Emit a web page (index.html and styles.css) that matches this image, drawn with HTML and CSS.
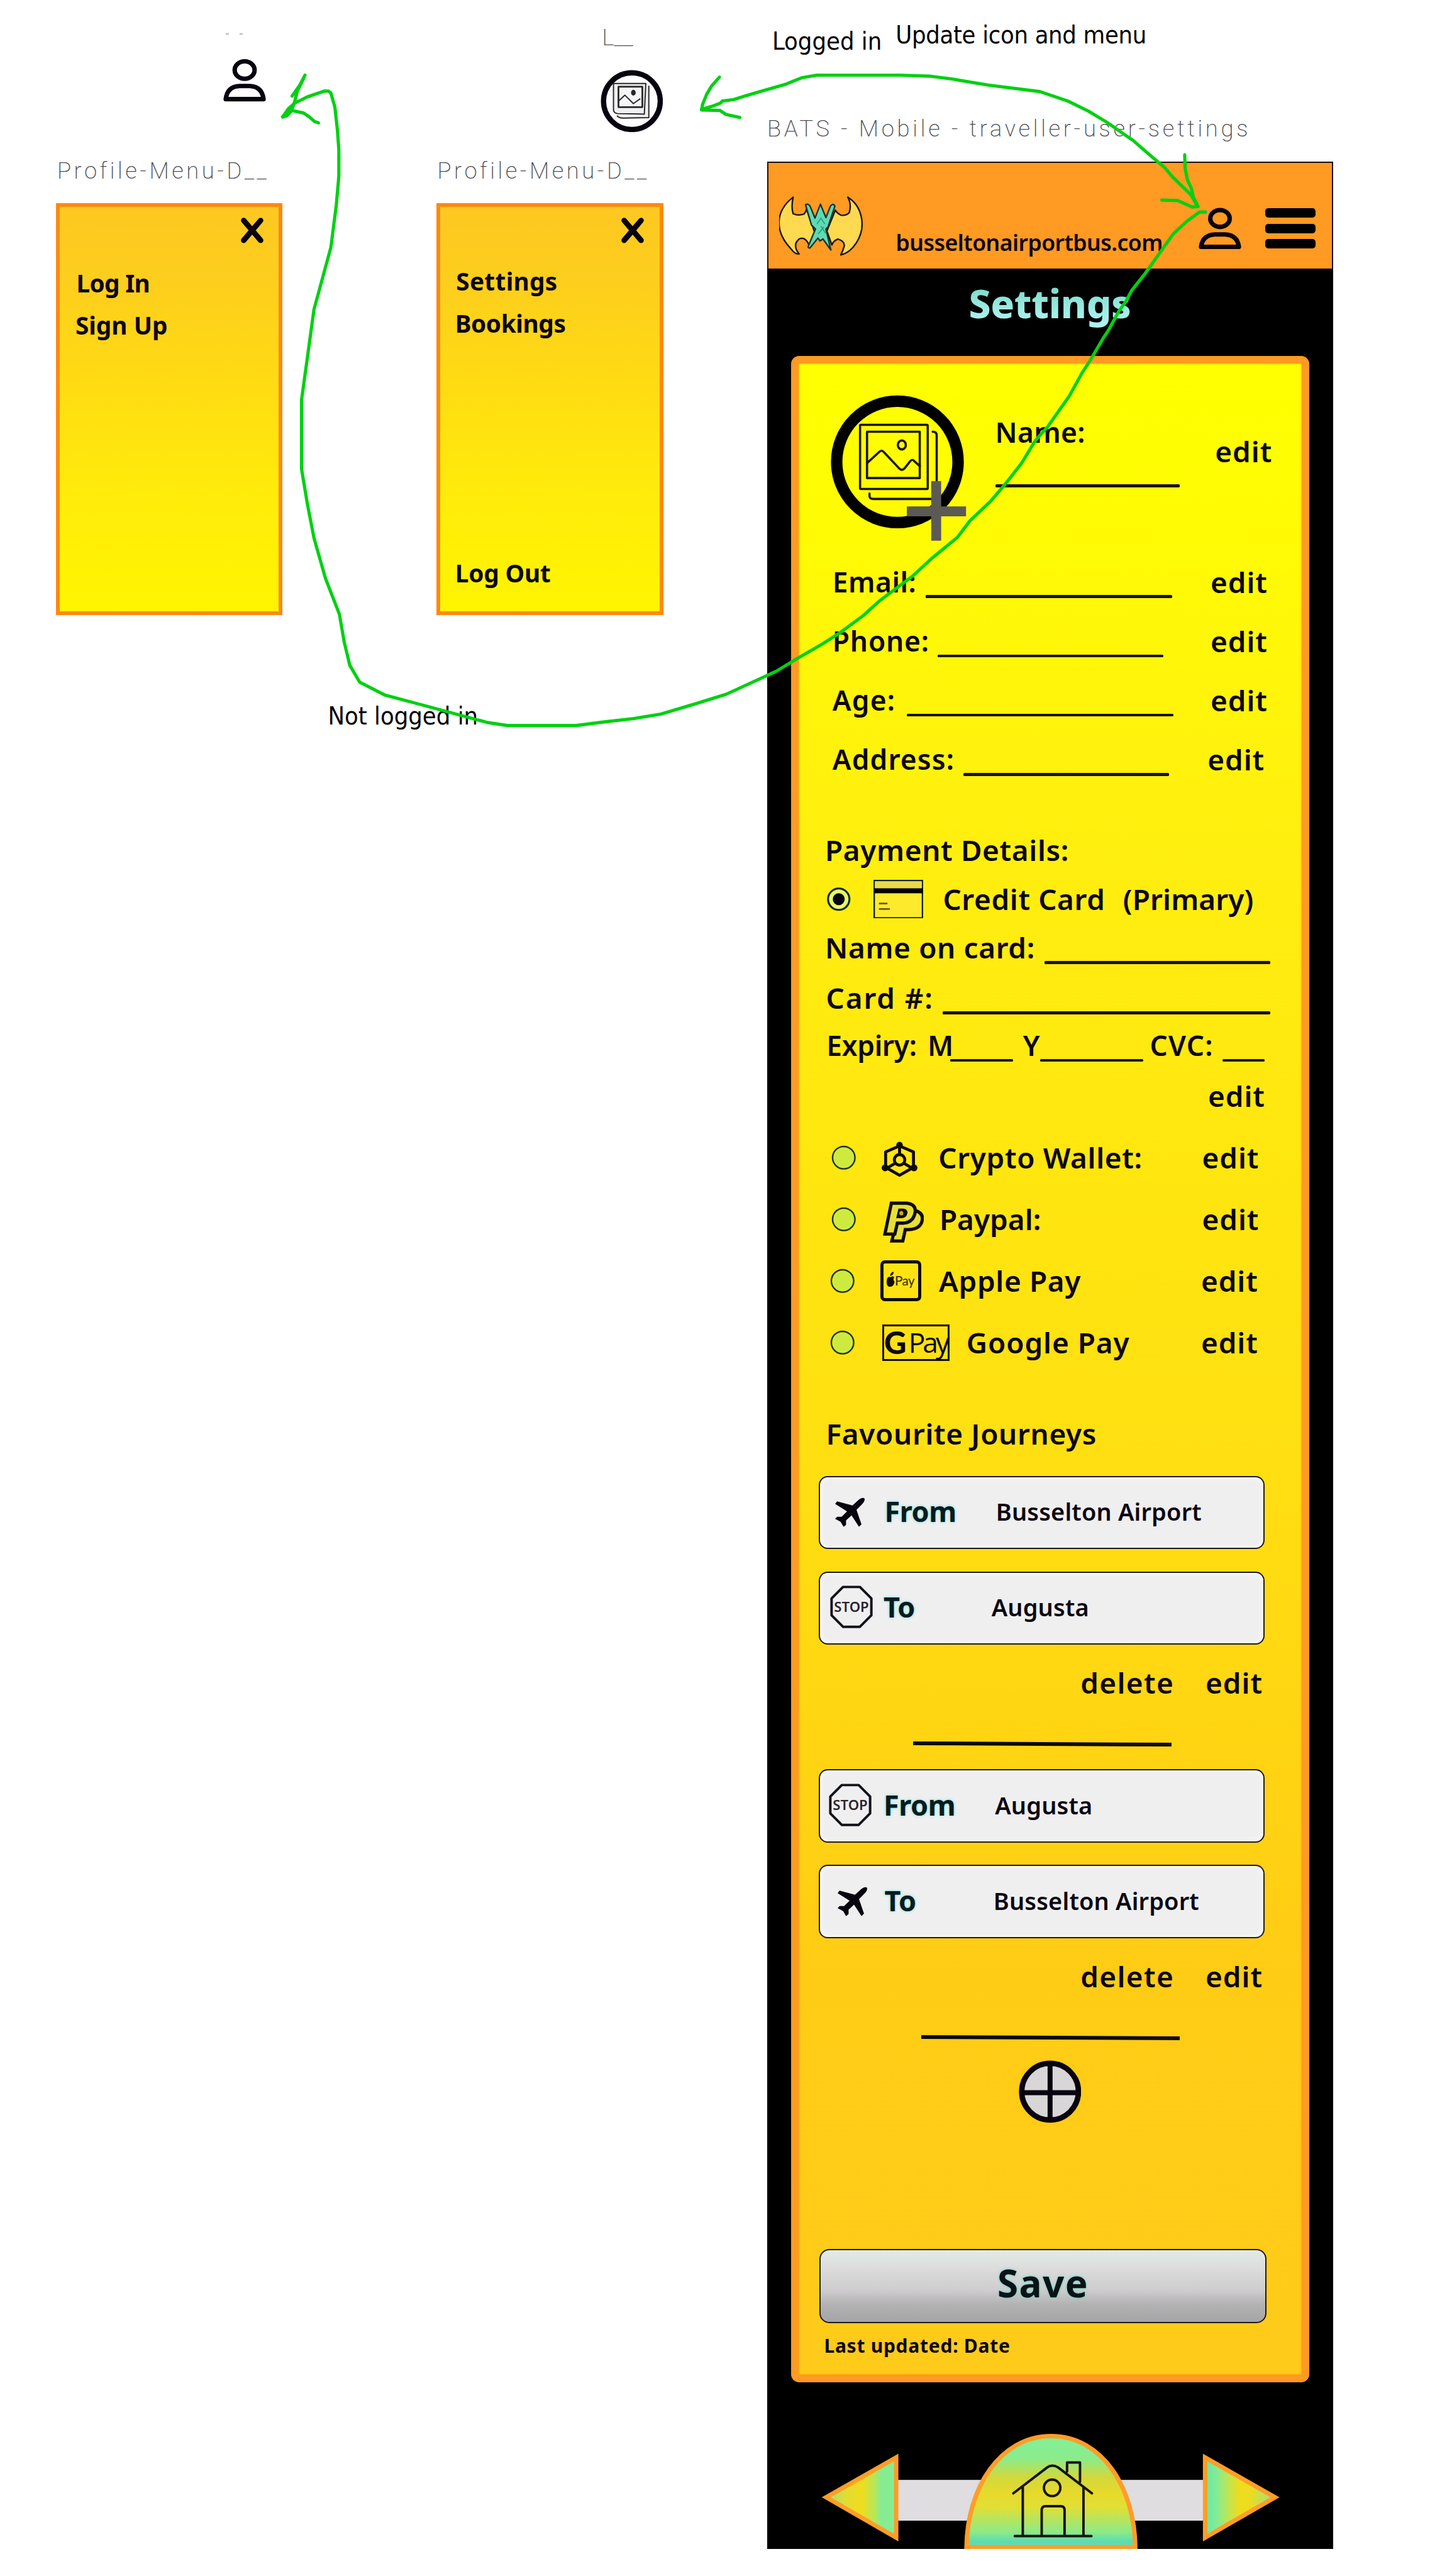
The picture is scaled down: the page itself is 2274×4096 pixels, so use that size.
FILE: index.html
```html
<!DOCTYPE html>
<html lang="en">
<head>
<meta charset="utf-8">
<title>BATS - Mobile - traveller-user-settings</title>
<link rel="stylesheet" href="styles.css">
</head>
<body>
<main class="canvas">

  <p class="frame-label label-tick" aria-hidden="true"><i></i><i></i></p>
  <svg class="node icon-guest" viewBox="0 0 86 86"><g fill="none" stroke="#08040f" stroke-width="9" stroke-linejoin="round"><ellipse cx="43" cy="22" rx="20" ry="17.500"/><path d="M5 80.500Q8 55 33 54H53Q78 55 81 80.500Z"/></g></svg>

  <p class="frame-label label-l">L__</p>
  <svg class="node icon-member" viewBox="0 0 126 126">
    <circle cx="63" cy="63" r="57" fill="#fdfdfd" stroke="#08040f" stroke-width="10.500"/>
    <g fill="#efeff0" stroke="#2a282c" stroke-width="2.500" stroke-linejoin="round"><path d="M33 92Q36 97 45 97L97 96V32"/><path d="M26 27.500H91L88 89 34 88Q26 87 26 80Z"/><path d="M36 34H84V75H36Z" stroke-width="3.500" fill="#f5f5f5"/><path d="M36 63L49 51 66 68 80 58" fill="none"/><ellipse cx="66" cy="46" rx="3.500" ry="4.500" fill="#2a282c"/></g>
  </svg>

  <p class="frame-label label-menu-a">Profile-Menu-D__</p>
  <p class="frame-label label-menu-b">Profile-Menu-D__</p>

  <nav class="menu menu-guest">
    <svg class="close" viewBox="0 0 48 54"><path d="M7 7L41 47M41 7L7 47" stroke="#08040f" stroke-width="11" stroke-linecap="round"/></svg>
    <a class="item log-in">Log In</a>
    <a class="item sign-up">Sign Up</a>
  </nav>
  <nav class="menu menu-member">
    <svg class="close" viewBox="0 0 48 54"><path d="M7 7L41 47M41 7L7 47" stroke="#08040f" stroke-width="11" stroke-linecap="round"/></svg>
    <a class="item settings">Settings</a>
    <a class="item bookings">Bookings</a>
    <a class="item log-out">Log Out</a>
  </nav>

  <p class="frame-label label-phone">BATS - Mobile - traveller-user-settings</p>

  <section class="phone">
    <header class="topbar">
      <svg class="logo" viewBox="0 0 168 122">
        <path d="M28 2Q24 22 28 35Q38 40 50 36Q54 32 55 26L72 74L60 98Q52 80 40 86Q26 98 40 116Q32 117 24 106C-10 70 -8 30 28 2ZM138 2Q146 16 141 33Q134 40 124 38Q116 34 113 28L96 70L106 98Q108 90 118 86Q132 90 131 100Q128 110 124 118Q142 114 155 94C178 58 164 18 138 2Z" fill="#ffd94f" stroke="#15141f" stroke-width="3" stroke-linejoin="round"/>
        <path d="M53 17Q60 14 63 22L72 44 83 16 94 43 103 20Q109 13 112 20L98 62 94 66 104 108 88 86 82 90 78 84 62 104Q56 105 60 97L73 66 65 58Z" fill="#5edab4" stroke="#16352f" stroke-width="3" stroke-linejoin="round"/>
        <path d="M76 56L84 44 92 56M78 76L90 62M84 60L93 74" fill="none" stroke="#2d9a7c" stroke-width="2"/>
      </svg>
      <span class="domain">busseltonairportbus.com</span>
      <svg class="user" viewBox="0 0 86 86"><g fill="none" stroke="#08040f" stroke-width="9" stroke-linejoin="round"><ellipse cx="43" cy="22" rx="19.500" ry="17"/><path d="M5 79Q8 55 33 54H53Q78 55 81 79Z"/></g></svg>
      <span class="burger"><i></i><i></i><i></i></span>
    </header>
    <h1 class="title"><span>Settings</span></h1>

    <form class="panel">
      <div class="profile">
        <svg class="avatar" viewBox="1670 794 274 295">
          <circle cx="1804" cy="928.500" r="122" fill="none" stroke="#000" stroke-width="23"/>
          <g fill="none" stroke="#1c1608" stroke-width="4.500" stroke-linejoin="round" stroke-linecap="round"><rect x="1729" y="854" width="136" height="129" rx="2"/><rect x="1743" y="868" width="106" height="93"/><path d="M1743 931L1768 908Q1773 904 1777 909L1808 942Q1813 947 1818 942L1830 927Q1834 922 1838 927L1849 937M1875 868Q1883 868 1883 875V970M1748 992V997Q1748 1003 1755 1003H1872"/><ellipse cx="1813" cy="894.500" rx="8" ry="9"/></g>
          <path d="M1872 967H1892V1018H1942V1038H1892V1087H1872V1038H1823V1018H1872Z" fill="#5c5a55"/>
        </svg>
        <div class="name"><span class="field-text">Name:</span><i class="blank"></i></div>
        <a class="edit">edit</a>
      </div>

      <div class="row email"><span class="field-text">Email:</span><i class="blank"></i><a class="edit">edit</a></div>
      <div class="row phone-no"><span class="field-text">Phone:</span><i class="blank"></i><a class="edit">edit</a></div>
      <div class="row age"><span class="field-text">Age:</span><i class="blank"></i><a class="edit">edit</a></div>
      <div class="row address"><span class="field-text">Address:</span><i class="blank"></i><a class="edit">edit</a></div>

      <h2 class="row payment-title">Payment Details:</h2>
      <div class="row credit">
        <svg class="radio" viewBox="0 0 50 50"><circle cx="25" cy="25" r="21.500" fill="#e9f76a" stroke="#102a22" stroke-width="4"/><circle cx="25" cy="25" r="12" fill="#08040f"/></svg>
        <svg class="card-icon" viewBox="0 0 100 78"><rect x="1.500" y="1.500" width="97" height="75" fill="#fdea2c" stroke="#15211c" stroke-width="3"/><rect x="3" y="3" width="94" height="14" fill="#e9da4a"/><rect x="1" y="17" width="98" height="10"/><path d="M11 47.500H28M11 58.500H33" stroke="#6b5c10" stroke-width="3.500"/></svg>
        <span class="credit-name">Credit Card</span><span class="primary">(Primary)</span>
      </div>
      <div class="row card-name"><span class="field-text">Name on card:</span><i class="blank"></i></div>
      <div class="row card-no"><span class="field-text">Card #:</span><i class="blank"></i></div>
      <div class="row expiry"><span class="ex">Expiry:</span><span class="mm">M</span><i class="blank b1"></i><span class="yy">Y</span><i class="blank b2"></i><span class="cvc">CVC:</span><i class="blank b3"></i></div>
      <div class="row card-edit"><a class="edit">edit</a></div>

      <div class="row method crypto">
        <svg class="radio" viewBox="0 0 50 50"><circle cx="25" cy="25" r="22.500" fill="#cfea3f" stroke="#1c3320" stroke-width="3"/></svg>
        <svg class="m-icon" viewBox="0 0 72 72"><g fill="none" stroke="#110b08" stroke-width="6" stroke-linejoin="round"><path d="M36 9L64 21V52L36 68 8 52V21Z"/><path d="M36 10V28M27 44L10 54M45 44L62 54"/><circle cx="36" cy="37" r="10.500"/></g><g fill="#110b08"><circle cx="36" cy="7" r="6.500"/><circle cx="7" cy="53" r="7"/><circle cx="65" cy="53" r="7"/></g></svg>
        <span class="m-name">Crypto Wallet:</span><a class="edit">edit</a>
      </div>
      <div class="row method paypal">
        <svg class="radio" viewBox="0 0 50 50"><circle cx="25" cy="25" r="22.500" fill="#cfea3f" stroke="#1c3320" stroke-width="3"/></svg>
        <svg class="m-icon" viewBox="0 0 83 84"><g fill="#e6df35" stroke="#110b08" stroke-width="6.500" stroke-linejoin="miter"><path d="M34 18H64Q82 24 79 38Q76 56 52 57H45L40 80H18L30 30Z"/><path d="M17 4H48Q66 6 65 21Q62 42 42 44H29L24 66H4Z"/><path d="M32 16H41Q50 17 48 25Q46 33 37 33H28Z" fill="#110b08" stroke-width="2"/></g><ellipse cx="37" cy="24" rx="4" ry="4.500" fill="#c9ae10"/></svg>
        <span class="m-name">Paypal:</span><a class="edit">edit</a>
      </div>
      <div class="row method apple">
        <svg class="radio" viewBox="0 0 50 50"><circle cx="25" cy="25" r="22.500" fill="#cfea3f" stroke="#1c3320" stroke-width="3"/></svg>
        <span class="apple-badge"><svg viewBox="0 0 16 32"><path d="M8 11Q12 8 15 11Q12 16 16 21Q13 31 8 30Q0 32 0 21Q0 8 8 11ZM7 9Q7 2 14 0Q14 7 7 9Z" fill="#110b08"/></svg>Pay</span>
        <span class="m-name">Apple Pay</span><a class="edit">edit</a>
      </div>
      <div class="row method google">
        <svg class="radio" viewBox="0 0 50 50"><circle cx="25" cy="25" r="22.500" fill="#cfea3f" stroke="#1c3320" stroke-width="3"/></svg>
        <span class="gpay-badge"><b>G</b><span>Pay</span></span>
        <span class="m-name">Google Pay</span><a class="edit">edit</a>
      </div>

      <h2 class="row fav-title">Favourite Journeys</h2>
      <div class="stop f1"><svg class="plane" viewBox="0 0 60 60"><path d="M46 6Q54 -1 59 2Q61 7 53 15L43 25L53 54L48 59L33 36L22 46L22 55L17 59L11 49L0 43L4 39L13 39L24 28L0 13L4 8L35 16Z" fill="#08040f"/></svg><b>From</b><span class="place">Busselton Airport</span></div>
      <div class="stop f2"><svg class="sign" viewBox="0 0 86 86"><path d="M26 3H60L83 26V60L60 83H26L3 60V26Z" fill="none" stroke="#15121a" stroke-width="5" stroke-linejoin="round"/><text x="43" y="53" text-anchor="middle" textLength="70" lengthAdjust="spacingAndGlyphs">STOP</text></svg><b>To</b><span class="place">Augusta</span></div>
      <div class="actions a1"><a class="delete">delete</a><a class="edit">edit</a></div>
      <hr class="rule r1">
      <div class="stop f3"><svg class="sign" viewBox="0 0 86 86"><path d="M26 3H60L83 26V60L60 83H26L3 60V26Z" fill="none" stroke="#15121a" stroke-width="5" stroke-linejoin="round"/><text x="43" y="53" text-anchor="middle" textLength="70" lengthAdjust="spacingAndGlyphs">STOP</text></svg><b>From</b><span class="place">Augusta</span></div>
      <div class="stop f4"><svg class="plane" viewBox="0 0 60 60"><path d="M46 6Q54 -1 59 2Q61 7 53 15L43 25L53 54L48 59L33 36L22 46L22 55L17 59L11 49L0 43L4 39L13 39L24 28L0 13L4 8L35 16Z" fill="#08040f"/></svg><b>To</b><span class="place">Busselton Airport</span></div>
      <div class="actions a2"><a class="delete">delete</a><a class="edit">edit</a></div>
      <hr class="rule r2">
      <svg class="add" viewBox="0 0 126 126"><circle cx="63" cy="63" r="57" fill="#d8d6d6" stroke="#08040f" stroke-width="11"/><path d="M63 6V120M6 65H120" stroke="#08040f" stroke-width="10"/></svg>
      <button class="save" type="button">Save</button>
      <p class="updated">Last updated: Date</p>
    </form>

    <svg class="tabbar" viewBox="1651 4888 922 235">
      <defs>
        <linearGradient id="dome" x1="0" y1="0" x2="0" y2="1"><stop offset="0.080" stop-color="#86ee94"/><stop offset="0.200" stop-color="#8aec8c"/><stop offset="0.370" stop-color="#d2d83c"/><stop offset="0.520" stop-color="#e8da2a"/><stop offset="0.640" stop-color="#e0df35"/><stop offset="0.860" stop-color="#8eea86"/><stop offset="0.950" stop-color="#5cdbb2"/></linearGradient>
        <linearGradient id="left" x1="1" y1="0" x2="0" y2="0"><stop offset="0.100" stop-color="#86ec92"/><stop offset="0.220" stop-color="#86ec92"/><stop offset="0.300" stop-color="#b4e75c"/><stop offset="0.500" stop-color="#f0dc1c"/><stop offset="0.700" stop-color="#e4dc30"/><stop offset="0.900" stop-color="#b8e060"/></linearGradient>
        <linearGradient id="right" x1="0" y1="0" x2="1" y2="0"><stop offset="0.080" stop-color="#76e89e"/><stop offset="0.180" stop-color="#86ec92"/><stop offset="0.300" stop-color="#b4e75c"/><stop offset="0.500" stop-color="#f0dc1c"/><stop offset="0.650" stop-color="#ecdc20"/><stop offset="0.850" stop-color="#b8e060"/></linearGradient>
      </defs>
      <rect x="1800" y="4983" width="625" height="82" fill="#dfdddf"/>
      <g stroke="#ff9d28" stroke-width="9"><path d="M1661 5018L1801.500 4938V5099Z" fill="url(#left)"/><path d="M2422.500 4938V5099L2563 5018Z" fill="url(#right)"/>
      <path d="M1943 5118.500C1944 5000 2010 4895 2113 4895S2281 5000 2282 5118.500Z" fill="url(#dome)"/></g>
      <g fill="none" stroke="#17140f" stroke-width="5" stroke-linejoin="round" stroke-linecap="round"><path d="M2037 5010L2105 4958Q2115 4951 2127 4958L2195 5010M2056 4998V5095M2178 4998V5095M2040 5096H2194M2094 5095V5044Q2094 5036 2102 5036H2132Q2140 5036 2140 5044V5095M2145 4966V4948H2171V4987"/><circle cx="2115" cy="4999" r="16.500"/></g>
    </svg>
  </section>

  <p class="note note-out">Not logged in</p>
  <p class="note note-in">Logged in</p>
  <p class="note note-update">Update icon and menu</p>

  <svg class="arrows" viewBox="0 0 2874 5176"><g fill="none" stroke="#02d012" stroke-width="6.500" stroke-linecap="round" stroke-linejoin="round">
    <path d="M1410 220L1430 214 1448 207 1452 203 1475 200 1500 192 1528 184 1580 169 1612 156 1642 151H1807L1868 153 1915 159 1986 171 2090 184 2146 203 2187 223 2225 246 2277 282 2315 315 2341 337 2357 356 2394 392 2407 415"/>
    <path d="M1446 155L1430 173 1420 190 1412 210 1410 221 1447 222 1459 230 1487 236M2381 311L2382 340 2387 363 2394 377 2398 395 2408 415 2396 416 2367 403 2335 402"/>
    <path d="M2423 426H2411L2386 444 2359 469 2343 491 2319 525 2302 549 2275 583 2262 607 2249 625 2227 665 2217 680 2192 723 2176 747 2149 796 2106 857 2081 885 2053 931 2017 977 1991 1007 1949 1047 1924 1080 1874 1121 1835 1157 1767 1208 1735 1237 1689 1271 1653 1294 1603 1323 1560 1349 1460 1395 1399 1414 1328 1435 1274 1444 1212 1451 1158 1458H1020L980 1452 846 1416 774 1397 723 1371 703 1337 692 1291 682 1234 654 1162 631 1081 618 1014 606 942V804L618 717 631 622 665 497 676 411 681 354V300L678 260 673 215 665 187 660 183H652L617 195 593 207 580 218 568 235"/>
    <path d="M613 151L602 172 587 193M610 158L598 182 592 205 585 224 576 233 568 235M587 222L610 227 623 236 632 244 640 247"/>
    <path d="M579 220L584 222 573 233Z" fill="#02d012"/>
  </g></svg>
</main>
</body>
</html>
```
FILE: styles.css
```css
/* 1rem is ten design units of the 2874 x 5176 board */
html { font-size: 7.9123px; }
* { box-sizing: border-box; }
body { margin: 0; background: #fff; }
p, h1, h2 { margin: 0; font-weight: inherit; }
svg { display: block; flex: none; }
i { display: block; flex: none; }

.canvas {
  position: relative;
  width: 287.4rem;
  height: 517.6rem;
  overflow: hidden;
  font-family: "Noto Sans", "Open Sans", sans-serif;
  color: #0d0712;
  white-space: nowrap;
}

/* Frames and notes placed freely on the board */
.node, .frame-label, .note, .menu, .phone, .arrows { position: absolute; }
.arrows { left: 0; top: 0; width: 100%; height: 100%; }

.icon-guest { left: 44.9rem; top: 11.9rem; width: 8.6rem; height: 8.6rem; }
.icon-member { left: 120.7rem; top: 14rem; width: 12.6rem; height: 12.6rem; }

.frame-label { font: 200 4.6rem/6rem "Roboto", sans-serif; color: #4b4b4f; }
.label-tick { left: 45.4rem; top: 6.7rem; display: flex; gap: 2.2rem; }
.label-tick i { width: .6rem; height: .2rem; background: #b5b5b8; }
.label-l { left: 121rem; top: 4.5rem; }
.label-menu-a, .label-menu-b { top: 31.4rem; letter-spacing: .57rem; }
.label-menu-a { left: 11.5rem; }
.label-menu-b { left: 87.9rem; }
.label-phone { left: 154.2rem; top: 22.9rem; letter-spacing: .59rem; }

.note { font: 5rem/6rem "DejaVu Sans Condensed", "DejaVu Sans", sans-serif; color: #000; }
.note-out { left: 65.9rem; top: 140.9rem; }
.note-in { left: 155.2rem; top: 5.3rem; }
.note-update { left: 180rem; top: 4.1rem; letter-spacing: -.04rem; }

/* Drop-down menus */
.menu {
  top: 40.8rem;
  width: 45.6rem;
  height: 82.8rem;
  display: flex;
  flex-direction: column;
  border: .8rem solid #fb8a12;
  background: linear-gradient(#fdc822, #fdcf1c 20%, #ffdc12 45%, #ffec0a 72%, #fff500);
}
.menu-guest { left: 11.2rem; }
.menu-member { left: 87.7rem; }
.close { width: 4.8rem; height: 5.4rem; margin: 2.1rem 3rem 0 auto; }
.item { font-size: 4.9rem; line-height: 6rem; font-weight: 700; }
.log-in { margin: 4.9rem 0 0 3.4rem; letter-spacing: -.09rem; }
.sign-up { margin: 2.5rem 0 0 3.2rem; }
.settings { margin: 4.5rem 0 0 3.2rem; letter-spacing: .04rem; }
.bookings { margin: 2.5rem 0 0 3rem; letter-spacing: -.05rem; }
.log-out { margin: 44.2rem 0 0 3rem; letter-spacing: -.02rem; }

/* Phone frame */
.phone {
  left: 154.2rem;
  top: 32.5rem;
  width: 113.8rem;
  height: 479.8rem;
  display: flex;
  flex-direction: column;
  background: #000;
}
.topbar {
  height: 21.5rem;
  display: flex;
  border: .3rem solid #1a0d05;
  border-bottom: 0;
  background: #ff9a22;
  flex: none;
}
.logo { width: 16.8rem; height: 12.2rem; margin: 6.7rem 0 0 2.2rem; }
.domain { flex: none; width: 54rem; margin: 13.5rem 0 0 6.6rem; font-size: 4.5rem; line-height: 5rem; font-weight: 600; letter-spacing: -.07rem; }
.user { width: 8.6rem; height: 8.6rem; margin: 8.9rem 0 0 6.9rem; }
.burger { display: flex; flex-direction: column; gap: 1.2rem; margin: 9.1rem 0 0 4.8rem; }
.burger i { width: 10.1rem; height: 1.9rem; border-radius: .6rem; background: #000; }
.title { height: 17.5rem; padding: 1.4rem 0 0 40.5rem; font-size: 7.9rem; line-height: 11rem; font-weight: 800; flex: none; }
.title span { background: linear-gradient(#7fdcca 25%, #a3efea 70%, #b3f4f0); -webkit-background-clip: text; background-clip: text; color: transparent; letter-spacing: -.05rem; }

.panel {
  width: 104.2rem;
  height: 407.3rem;
  margin-left: 4.8rem;
  display: flex;
  flex-direction: column;
  flex: none;
  border: 1.6rem solid #ff9a22;
  border-radius: 1.6rem;
  background: linear-gradient(#ffff00, #fffb04 8%, #ffee10 25%, #ffe60f 40%, #ffdf12 55%, #ffd512 68%, #ffcc15 80%, #fecb1a) padding-box;
  box-shadow: inset 0 0 .4rem #e88a10;
  font-size: 5.8rem;
  font-weight: 600;
}
.blank { height: .6rem; background: #18120a; border-radius: .2rem; }
.edit { letter-spacing: .12rem; }

.profile { display: flex; height: 35.8rem; margin-top: 6.3rem; padding-left: 6.5rem; }
.avatar { width: 27.4rem; height: 29.5rem; }
.name { width: 37.1rem; margin: 4.4rem 0 0 5.6rem; display: flex; flex-direction: column; line-height: 6.5rem; letter-spacing: .04rem; }
.name .blank { margin-top: 7.1rem; width: 37.1rem; }
.profile .edit { margin: 8.1rem 0 0 7.1rem; line-height: 6.5rem; }

.row { display: flex; align-items: center; height: 6.5rem; line-height: 6.5rem; padding: 0 6.9rem 0 6.8rem; flex: none; letter-spacing: .08rem; font-size: 5.8rem; }
.row + .row { margin-top: 5.4rem; }
.row > span { flex: none; }
.row .blank { align-self: flex-end; }
.row .edit { margin-left: auto; }
.profile + .row { margin-top: -1.4rem; }
.profile .field-text, .email .field-text, .phone-no .field-text, .age .field-text, .address .field-text { font-size: 5.6rem; }
.email .field-text { width: 18.7rem; letter-spacing: .06rem; }
.email .blank { width: 49.6rem; }
.phone-no .field-text { width: 21.1rem; letter-spacing: .1rem; }
.phone-no .blank { width: 45.4rem; }
.age .field-text { width: 14.9rem; letter-spacing: .15rem; }
.age .blank { width: 53.6rem; }
.address { padding-right: 7.5rem; }
.address .field-text { width: 26.3rem; letter-spacing: .14rem; }
.address .blank { width: 41.4rem; }

.row.payment-title { margin-top: 11.7rem; padding-left: 5.3rem; }
.row.credit { margin-top: 3.3rem; padding-left: 5.6rem; }
.radio { width: 5rem; height: 5rem; }
.card-icon { width: 10rem; height: 7.8rem; margin-left: 4.4rem; }
.credit-name { width: 36.2rem; margin-left: 4rem; }
.primary { letter-spacing: .01rem; }
.row.card-name { margin-top: 3.3rem; padding-left: 5.3rem; }
.card-name .field-text { width: 44.1rem; }
.card-name .blank { width: 45.4rem; }
.row.card-no { margin-top: 3.6rem; padding-left: 5.5rem; }
.card-no .field-text { width: 23.4rem; letter-spacing: .24rem; }
.card-no .blank { width: 65.9rem; }
.row.expiry { margin-top: 3.1rem; padding-left: 5.6rem; letter-spacing: -.04rem; font-size: 5.6rem; }
.expiry .ex { width: 20.3rem; }
.expiry .mm { width: 4.6rem; }
.b1 { width: 12.6rem; }
.expiry .yy { width: 3.4rem; margin-left: 2rem; }
.b2 { width: 20.8rem; }
.expiry .cvc { width: 14.6rem; margin-left: 1.3rem; letter-spacing: .15rem; }
.b3 { width: 8.5rem; }
.row.card-edit { margin-top: 3.6rem; padding-right: 7.4rem; }

.row.method { margin-top: 5.9rem; padding: 0 8.6rem 0 6.6rem; }
.method .radio { margin-top: -.1rem; }
.crypto .m-icon { width: 7.2rem; height: 7.2rem; margin: .6rem 0 0 5.1rem; }
.crypto .m-name { margin-left: 4.2rem; }
.paypal .m-icon { width: 8.3rem; height: 8.4rem; margin: 1rem 0 0 5.3rem; }
.paypal .m-name { margin-left: 3.1rem; letter-spacing: 0; }
.row.apple, .row.google { padding-left: 6.3rem; padding-right: 8.8rem; }
.apple-badge { display: flex; align-items: center; justify-content: center; width: 8.2rem; height: 8.2rem; margin-left: 5.1rem; border: .7rem solid #110b08; border-radius: .9rem; font: 500 2.6rem/3rem "Lato", sans-serif; letter-spacing: -.08rem; color: #3c3208; }
.apple-badge svg { width: 1.6rem; height: 3.2rem; margin-bottom: .6rem; }
.apple .m-name { margin-left: 3.6rem; }
.gpay-badge { display: flex; align-items: center; width: 13.5rem; height: 7.4rem; margin-left: 5.5rem; border: .5rem solid #110b08; }
.gpay-badge b { font: 900 6.2rem/6rem "Lato", sans-serif; letter-spacing: -.1rem; }
.gpay-badge span { font: 400 5.6rem/6rem "Open Sans", sans-serif; letter-spacing: -.5rem; margin-left: .5rem; }
.google .m-name { margin-left: 3.4rem; letter-spacing: .12rem; }

.row.fav-title { margin: 11.8rem 0 5.2rem; padding-left: 5.5rem; }
.stop {
  display: flex;
  align-items: center;
  width: 89.5rem;
  height: 14.7rem;
  margin-left: 4.1rem;
  flex: none;
  border: .3rem solid #1d1824;
  border-radius: 1.8rem;
  background: #efeff0;
  box-shadow: inset 0 0 1.2rem #fff;
}
.stop b { width: 22.4rem; margin-top: -.5rem; font-size: 5.7rem; font-weight: 700; letter-spacing: -.06rem; color: #0b1a20; text-shadow: 0 0 .6rem #5fe6d2; }
.place { margin-top: -.4rem; font-size: 4.8rem; letter-spacing: .02rem; }
.plane { width: 6rem; height: 6rem; margin: 0 3.9rem 0 3rem; }
.sign { width: 8.6rem; height: 8.6rem; margin: -.3rem 2.2rem 0 1.9rem; }
.sign text { font: 600 27px "Noto Sans", sans-serif; fill: #2a262c; }
.f2, .f4 { margin-top: 4.5rem; }
.f2 .place { margin-left: -.7rem; }
.f3 .sign { margin-left: 1.7rem; margin-right: 2.4rem; }
.f4 .plane { margin-left: 3.5rem; margin-right: 3.4rem; }
.f4 .place { margin-left: -.5rem; }
.actions { display: flex; justify-content: flex-end; gap: 6.3rem; height: 6.5rem; line-height: 6.5rem; margin-top: 4.5rem; padding-right: 7.9rem; }
.delete { letter-spacing: .17rem; }
.rule { flex: none; width: 51.9rem; height: .8rem; margin: 8.6rem 0 0 23rem; border: 0; background: #0d0a05; transform: rotate(.3deg); }
.r2 { margin-left: 24.6rem; }
.f3 { margin-top: 4.7rem; }
.add { width: 12.6rem; height: 12.6rem; margin: 4.2rem 0 0 44.2rem; }
.save {
  width: 89.8rem;
  height: 14.9rem;
  margin: 25.3rem 0 0 4.2rem;
  padding: 0 0 1rem;
  flex: none;
  border: .3rem solid #1d1824;
  border-radius: 2rem;
  background: linear-gradient(#e2ebe6, #dcdcdc 25%, #cfcdcf 55%, #b4b3b4 75%, #a5a4a6);
  font: 700 7.6rem/10rem "Noto Sans", sans-serif;
  letter-spacing: .18rem;
  color: #0b1218;
  text-shadow: 0 0 .6rem #4fdcc4;
}
.updated { margin: 2rem 0 0 5.1rem; font-size: 3.8rem; line-height: 5rem; font-weight: 700; letter-spacing: .09rem; }
.tabbar { width: 92.2rem; height: 23.5rem; margin: auto 0 0 10.9rem; }
```
